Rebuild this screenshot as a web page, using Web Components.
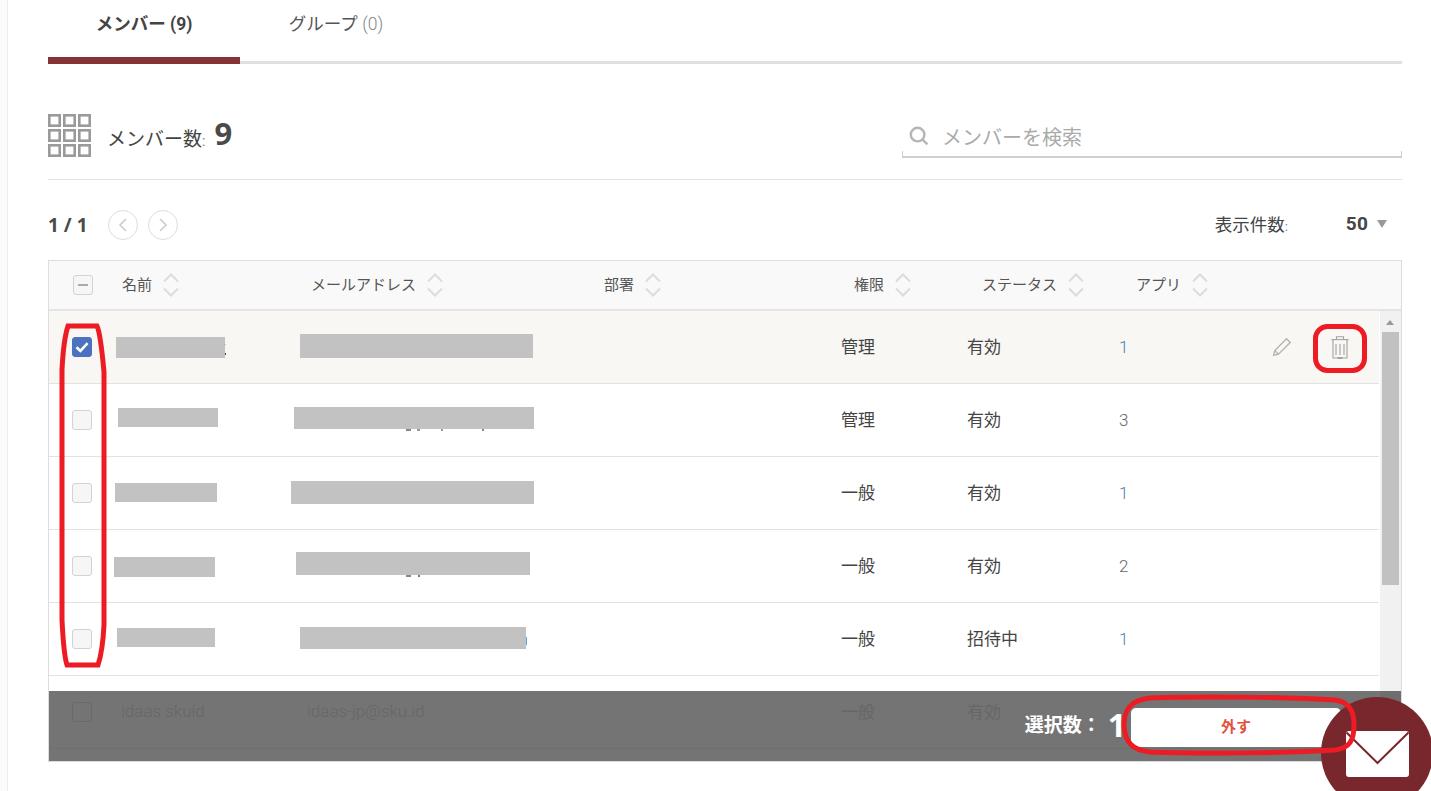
<!DOCTYPE html>
<html lang="ja">
<head>
<meta charset="utf-8">
<title>メンバー</title>
<style>
  html,body{margin:0;padding:0;height:791px;overflow:hidden;background:#fff;font-family:"Roboto","Noto Sans CJK JP",sans-serif;color:#444}
</style>
</head>
<body>
<x-page>
  <x-tabs></x-tabs>
  <x-summary></x-summary>
  <x-pager></x-pager>
  <x-member-table>
    <x-member-row selected actions name-box="67,26,109,21" mail-box="251,23,233,24" role="管理" status="有効" apps="1" link specks="176,33,1,1,#9fc3e6;176,42,1,2,#444"></x-member-row>
    <x-member-row name-box="69,24,100,19" mail-box="245,23,240,22" role="管理" status="有効" apps="3" specks="357,45,5,2,#888;368,45,3,2,#999;392,45,2,2,#999;433,45,2,2,#888"></x-member-row>
    <x-member-row name-box="66,26,102,19" mail-box="242,24,243,23" role="一般" status="有効" apps="1" link></x-member-row>
    <x-member-row name-box="65,27,101,20" mail-box="247,22,234,23" role="一般" status="有効" apps="2" specks="357,45,5,2,#888;369,45,2,2,#777"></x-member-row>
    <x-member-row name-box="68,25,98,19" mail-box="251,24,226,22" role="一般" status="招待中" apps="1" link specks="477,34,1,8,#5aa5e0"></x-member-row>
    <x-member-row dim name="idaas skuid" mail="idaas-jp@sku.id" role="一般" status="有効"></x-member-row>
  </x-member-table>
</x-page>
<x-fab></x-fab>
<x-marks></x-marks>

<script>
const FONT = '"Roboto","Noto Sans CJK JP",sans-serif';
function def(name, html){
  customElements.define(name, class extends HTMLElement{
    connectedCallback(){
      if(this.shadowRoot) return;
      const r=this.attachShadow({mode:'open'});
      r.innerHTML = typeof html==='function' ? html(this) : html;
    }
  });
}

def('x-page',`<style>
  :host{display:block;box-sizing:border-box;width:1431px;height:791px;padding:0 29px 0 48px;position:relative;overflow:hidden;font-family:${FONT}}
  .edge{position:absolute;left:0;top:0;bottom:0;width:7px;background:#fbfbfb;border-right:1px solid #ececec}
</style><div class="edge"></div><slot></slot>`);

def('x-tabs',`<style>
  :host{display:block;height:64px;position:relative;box-sizing:border-box;border-bottom:3px solid #e0e0e0}
  .tabs{display:flex;height:61px}
  .tab{width:192px;box-sizing:border-box;text-align:center;font-size:17.5px;line-height:20px;padding-top:14px;color:#555;height:64px;white-space:nowrap}
  .on{font-weight:700;color:#444;border-bottom:7px solid #843436}
  .count{color:#888;font-weight:300}
  .on .count{color:#444;font-weight:700}
</style><div class="tabs">
  <div class="tab on">メンバー <span class="count">(9)</span></div>
  <div class="tab">グループ <span class="count">(0)</span></div>
</div>`);

def('x-summary',`<style>
  :host{display:flex;justify-content:space-between;height:116px;box-sizing:border-box;border-bottom:1px solid #e2e2e2;padding-top:50px}
  .left{display:flex;align-items:flex-start}
  svg.grid{display:block;width:43px;height:43px}
  .label{margin-left:16px;font-size:19px;line-height:28px;margin-top:6px;color:#444;white-space:nowrap}
  .colon{font-size:14px;color:#777}
  .big{font-size:31px;font-weight:700;line-height:28px;margin-left:9px;font-family:"Noto Sans",sans-serif;position:relative;top:-1px;color:#4a4a4a}
  .search{width:500px;height:44px;box-sizing:border-box;display:flex;align-items:center;position:relative;border-bottom:2px solid #d0d0d0;padding:2px 0 0 7px;color:#aaa;font-size:20px}
  .search::before,.search::after{content:"";position:absolute;bottom:0;width:1px;height:5px;background:#d0d0d0}
  .search::before{left:0}.search::after{right:0}
  .search svg{width:20px;height:20px;margin-right:13px}
</style>
<div class="left">
  <svg class="grid" viewBox="0 0 43 43" fill="none" stroke="#9a9a9a" stroke-width="2.6">
    <rect x="1.3" y="1.3" width="10.4" height="10.4"/><rect x="16.3" y="1.3" width="10.4" height="10.4"/><rect x="31.3" y="1.3" width="10.4" height="10.4"/>
    <rect x="1.3" y="16.3" width="10.4" height="10.4"/><rect x="16.3" y="16.3" width="10.4" height="10.4"/><rect x="31.3" y="16.3" width="10.4" height="10.4"/>
    <rect x="1.3" y="31.3" width="10.4" height="10.4"/><rect x="16.3" y="31.3" width="10.4" height="10.4"/><rect x="31.3" y="31.3" width="10.4" height="10.4"/>
  </svg>
  <div class="label">メンバー数<span class="colon">:</span><span class="big">9</span></div>
</div>
<div class="search">
  <svg viewBox="0 0 20 20" fill="none" stroke="#b5b5b5" stroke-width="2.4"><circle cx="8.6" cy="8.6" r="6.8"/><path d="M13.6 13.6 18.4 18.4"/></svg>
  <span>メンバーを検索</span>
</div>`);

def('x-pager',`<style>
  :host{display:flex;align-items:center;justify-content:space-between;height:80px;box-sizing:border-box;padding-top:10px;color:#444}
  .l,.r{display:flex;align-items:center}
  .page{font-family:"Noto Sans",sans-serif;font-size:19px;font-weight:700;width:60px;box-sizing:border-box;color:#4a4a4a}
  .c{width:30px;height:30px;box-sizing:border-box;border:1px solid #ddd;border-radius:50%;margin-right:10px;display:flex;align-items:center;justify-content:center}
  .c svg{width:10px;height:14px}
  .lab{font-size:17.5px;color:#444;margin-right:58px;position:relative;top:-2px}
  .colon{font-size:13px;color:#777}
  .num{font-size:19px;font-weight:700;margin-right:9px;position:relative;top:-2px;letter-spacing:.2px}
  .tri{width:0;height:0;border-left:5.5px solid transparent;border-right:5.5px solid transparent;border-top:8px solid #999;margin-right:15px;position:relative;top:-1px}
</style>
<div class="l">
  <div class="page">1 / 1</div>
  <div class="c"><svg viewBox="0 0 10 14" fill="none" stroke="#ccc" stroke-width="1.6"><path d="M8 1 2 7l6 6"/></svg></div>
  <div class="c"><svg viewBox="0 0 10 14" fill="none" stroke="#ccc" stroke-width="1.6"><path d="M2 1l6 6-6 6"/></svg></div>
</div>
<div class="r"><span class="lab">表示件数<span class="colon">:</span></span><span class="num">50</span><span class="tri"></span></div>`);

def('x-check',t=>{
  const on=t.hasAttribute('on'), mix=t.hasAttribute('mixed');
  return `<style>
  :host{display:block;width:20px;height:20px;box-sizing:border-box;border-radius:3px;border:1px solid ${on?'#4a72c0':'#d2d2d2'};background:${on?'#4a72c0':'#f6f6f6'}}
  svg{display:block;width:18px;height:18px}
  :host([dim]){background:#fff;border-color:#e6e6e6}
  </style>${on?'<svg viewBox="0 0 18 18" fill="none" stroke="#fff" stroke-width="2.6"><path d="M3.5 9.2 7.4 13 14.6 5.2"/></svg>':''}${mix?'<svg viewBox="0 0 18 18" fill="none" stroke="#aaa" stroke-width="2"><path d="M4 9h10"/></svg>':''}`;
});

def('x-sort',`<style>
  :host{display:flex;align-items:center;font-size:15px;color:#555;white-space:nowrap}
  span{position:relative;top:-2px}
  svg{width:18px;height:26px;margin-left:10px;flex:none}
</style><span><slot></slot></span><svg viewBox="0 0 18 26" fill="none" stroke="#dcdcdc" stroke-width="2"><path d="M2 9.5 9 2.5l7 7"/><path d="M2 16.5l7 7 7-7"/></svg>`);

def('x-member-table',`<style>
  :host{display:block;box-sizing:border-box;height:502px;border:1px solid #ddd;position:relative;overflow:hidden;background:#fff}
  .head{display:grid;grid-template-columns:49px 189px 293px 250px 128px 154px 1fr;padding-left:24px;align-items:center;height:50px;box-sizing:border-box;background:#f9f9f9;border-bottom:2px solid #e4e4e4}
  .body{display:flex;height:450px;overflow:hidden}
  .rows{flex:1;min-width:0}
  .bar{width:21px;flex:none;background:#f1f1f1;margin-top:-2px;padding:2px 1px 0 0;position:relative;display:flex;flex-direction:column;align-items:center;box-sizing:border-box}
  .up{width:0;height:0;border-left:4.5px solid transparent;border-right:4.5px solid transparent;border-bottom:5px solid #999;margin-top:9px}
  .thumb{width:17px;height:253px;background:#c1c1c1;margin-top:7px;margin-left:1px}
  .sel{position:absolute;left:0;right:0;bottom:0;height:70px;background:rgba(0,0,0,.545);display:flex;align-items:center;justify-content:flex-end;padding-right:60px;color:#fff}
  .sel .t{font-size:19px;font-weight:700;white-space:nowrap;position:relative;top:-3px}
  .sel .n{font-size:32px;font-weight:700;margin:0 5px 0 7px;line-height:1;font-family:"Noto Sans",sans-serif;position:relative;top:-1px}
  .btn{width:210px;height:39px;background:#fff;border-radius:5px;color:#e2533f;font:700 15px ${FONT};display:flex;align-items:center;justify-content:center;position:relative;top:1px}
  .btn span{position:relative;top:-2px}
</style>
<div class="head">
  <x-check mixed></x-check>
  <x-sort>名前</x-sort><x-sort>メールアドレス</x-sort><x-sort>部署</x-sort><x-sort>権限</x-sort><x-sort>ステータス</x-sort><x-sort>アプリ</x-sort>
</div>
<div class="body">
  <div class="rows"><slot></slot></div>
  <div class="bar"><div class="up"></div><div class="thumb"></div></div>
</div>
<div class="sel"><span class="t">選択数：</span><span class="n">1</span><div class="btn"><span>外す</span></div></div>`);

def('x-member-row',t=>{
  const box=(a)=>{const v=t.getAttribute(a); if(!v) return ''; const [x,y,w,h]=v.split(','); return `<div class="redact" style="left:${x}px;top:${y}px;width:${w}px;height:${h}px"></div>`;};
  const specks=(t.getAttribute('specks')||'').split(';').filter(Boolean).map(s=>{const [x,y,w,h,c]=s.split(',');return `<div class="redact" style="left:${x}px;top:${y}px;width:${w}px;height:${h}px;background:${c}"></div>`}).join('');
  const sel=t.hasAttribute('selected'), dim=t.hasAttribute('dim');
  return `<style>
  :host{display:block;height:73px;box-sizing:border-box;width:1330px;border-bottom:1px solid ${dim?'#f4f4f4':'#e2e2e2'};background:${sel?'#f8f7f3':'#fff'};position:relative;font-size:17px;color:${dim?'#e2e2e2':'#444'}}
  .g{display:grid;grid-template-columns:49px 186px 534px 126px 152px 1fr;padding-left:23px;align-items:center;height:72px}
  .t{position:relative;top:-1px;white-space:nowrap;font-weight:300}
  .j{position:relative;top:-2px;white-space:nowrap}
  .redact{position:absolute;background:#c2c2c2}
  .apps{position:relative;font-weight:300;color:${t.hasAttribute('link')?'#4a7fb0':'#666'}}
  .act{display:flex;align-items:center;justify-content:flex-end;padding-right:30px;gap:39px}
  .act svg{display:block}
</style>
<div class="g">
  <x-check ${sel?'on':''} ${dim?'dim':''}></x-check>
  <div class="t">${t.getAttribute('name')||''}</div>
  <div class="t">${t.getAttribute('mail')||''}</div>
  <div class="j">${t.getAttribute('role')||''}</div>
  <div class="j">${t.getAttribute('status')||''}</div>
  <div style="display:grid;grid-template-columns:auto 1fr;align-items:center">
    <div class="apps">${t.getAttribute('apps')||''}</div>
    ${t.hasAttribute('actions')?`<div class="act">
      <svg width="20" height="20" viewBox="0 0 20 20" fill="none" stroke="#b4b4b4" stroke-width="1.4"><path d="M14.5 1.8 18.2 5.4 6.5 17.2 1.6 18.4 2.8 13.5Z"/><path d="M2.8 13.5 6.5 17.2"/></svg>
      <svg width="18" height="23" viewBox="0 0 18 23" fill="none" stroke="#a2a2a2" stroke-width="1.1"><path d="M0.5 3.6H17.5"/><path d="M5.5 3.6V0.8h7V3.6"/><path d="M2 3.6V22H16V3.6"/><path d="M5 8V19M9 8V19M13 8V19"/><path d="M6.5 22H11.5" stroke="#6f86a8"/></svg>
    </div>`:''}
  </div>
</div>${box('name-box')}${box('mail-box')}${specks}`;
});

def('x-fab',`<style>
  :host{display:block;position:absolute;left:1321px;top:697px;width:112px;height:112px;border-radius:50%;background:#78282c}
  svg{position:absolute;left:25px;top:34px;width:63px;height:46px}
</style><svg viewBox="0 0 63 46"><rect width="63" height="46" rx="3" fill="#fff"/><path d="M0.5 1.5 31.5 32 62.5 1.5" fill="none" stroke="#78282c" stroke-width="2"/></svg>`);

def('x-marks',`<style>
  :host{display:block;position:absolute;left:0;top:0;width:1431px;height:791px;pointer-events:none}
  svg{display:block;width:1431px;height:791px}
  path,rect{fill:none;stroke:#ed1c24;stroke-width:5}
</style><svg viewBox="0 0 1431 791">
  <path d="M68 326H97C100 332 102 350 104 372V625C103 645 101 656 98 665H67C64 656 63 640 62 620V370C63 350 65 335 68 326Z"/>
  <rect x="1315.5" y="326.5" width="49" height="44" rx="12"/>
  <path d="M1150 698C1200 696 1290 697 1335 700C1350 702 1354 712 1354 725C1354 740 1350 748 1335 750C1290 753 1200 754 1150 752C1132 750 1125 742 1124 726C1124 710 1130 700 1150 698Z"/>
</svg>`);
</script>
</body>
</html>
